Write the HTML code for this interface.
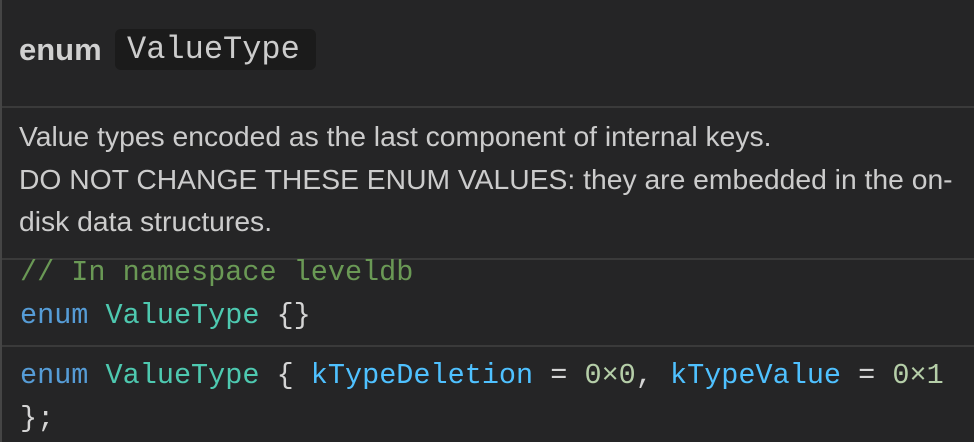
<!DOCTYPE html>
<html><head><style>
html,body{margin:0;padding:0;width:974px;height:442px;overflow:hidden;background:#252526;}
body{position:relative;font-family:"Liberation Sans",sans-serif;color:#cccccc;}
.lb{position:absolute;left:0;top:0;width:2px;height:442px;background:#454545;}
.sep{position:absolute;left:2px;right:0;height:2px;background:#3a3a3a;}
.t{position:absolute;white-space:nowrap;}
.m{font-family:"Liberation Mono",monospace;font-size:28.5px;line-height:43px;}
.kw{color:#569cd6}.ty{color:#4ec9b0}.en{color:#4fc1ff}.nu{color:#b5cea8}.cm{color:#6a9955}.p{color:#d4d4d4}
</style></head><body>
<div class="lb"></div>
<div class="t" style="left:19px;top:29px;font-size:31px;font-weight:bold;line-height:42px;color:#d0d0d0;">enum</div>
<div class="t" style="left:115px;top:29px;width:201px;height:41px;background:#1b1b1b;border-radius:6px;"></div>
<div class="t" style="left:127px;top:29px;font-family:'Liberation Mono',monospace;font-size:32px;line-height:42px;color:#cccccc;">ValueType</div>
<div class="sep" style="top:106px"></div>
<div class="t" style="left:19px;top:116px;font-size:28px;line-height:42.5px;transform:scaleX(1.01);transform-origin:0 0;">Value types encoded as the last component of internal keys.<br>DO NOT CHANGE THESE ENUM VALUES: they are embedded in the on-<br>disk data structures.</div>
<div class="sep" style="top:258px"></div>
<div class="t m" style="left:20px;top:251px;"><span class="cm">// In namespace leveldb</span></div>
<div class="t m" style="left:20px;top:294px;"><span class="kw">enum</span> <span class="ty">ValueType</span> <span class="p">{}</span></div>
<div class="sep" style="top:345px"></div>
<div class="t m" style="left:20px;top:354px;"><span class="kw">enum</span> <span class="ty">ValueType</span> <span class="p">{</span> <span class="en">kTypeDeletion</span> <span class="p">=</span> <span class="nu">0×0</span><span class="p">,</span> <span class="en">kTypeValue</span> <span class="p">=</span> <span class="nu">0×1</span></div>
<div class="t m" style="left:20px;top:397px;"><span class="p">};</span></div>
</body></html>
